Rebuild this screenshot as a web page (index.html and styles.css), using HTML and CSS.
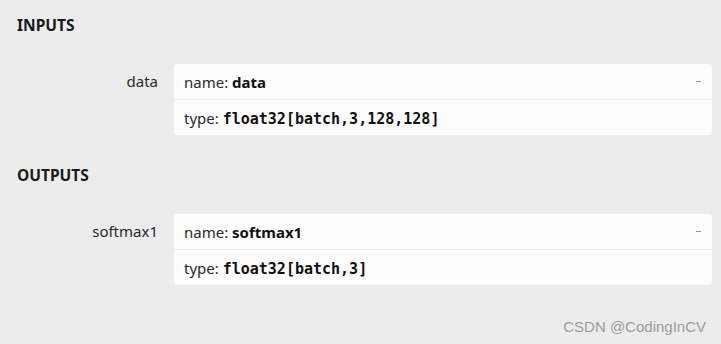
FILE: index.html
```html
<!DOCTYPE html>
<html lang="en">
<head>
  <meta charset="UTF-8" />
  <meta name="viewport" content="width=device-width, initial-scale=1.0" />
  <title>Model properties</title>
  <link rel="stylesheet" href="styles.css">
</head>
<body>
  <div class="sidebar">
    <div class="section">
      <div class="section-title">INPUTS</div>
      <div class="item">
        <div class="item-name">data</div>
        <div class="item-card">
          <div class="item-row">
            <span>name: <b>data</b></span>
            <span class="toggle"></span>
          </div>
          <div class="item-row">
            <span>type: <code>float32[batch,3,128,128]</code></span>
          </div>
        </div>
      </div>
    </div>

    <div class="section">
      <div class="section-title">OUTPUTS</div>
      <div class="item">
        <div class="item-name">softmax1</div>
        <div class="item-card">
          <div class="item-row">
            <span>name: <b>softmax1</b></span>
            <span class="toggle"></span>
          </div>
          <div class="item-row">
            <span>type: <code>float32[batch,3]</code></span>
          </div>
        </div>
      </div>
    </div>
  </div>

  <div class="watermark">CSDN @CodingInCV</div>
</body>
</html>
```

FILE: styles.css
```css
body {
  margin: 0;
  height: 100vh;
  background-color: #ececec;
  color: #222;
  font-family: "Noto Sans", "Open Sans", sans-serif;
  font-size: 15px;
  overflow: hidden;
}

.sidebar {
  padding: 15px 9px 0 17px;
}

.section {
  margin-bottom: 30px;
}

.section-title {
  font-weight: bold;
  font-size: 15.5px;
  line-height: 20px;
  color: #1a1a1a;
  margin-bottom: 29px;
}

.item {
  display: grid;
  grid-template-columns: 141px 538px;
  column-gap: 16px;
}

.item-name {
  text-align: right;
  line-height: 35px;
  color: #2a2a2a;
}

.item-card {
  background-color: #fcfcfc;
  border-radius: 3px;
}

.item-row {
  display: flex;
  align-items: center;
  justify-content: space-between;
  height: 35px;
  padding: 0 10px;
  color: #2a2a2a;
}

.item-row + .item-row {
  border-top: 1px solid #ececec;
}

.item-row b {
  color: #111;
}

.item-row code {
  font-family: "DejaVu Sans Mono", monospace;
  font-weight: bold;
  font-size: 15px;
  color: #111;
}

.toggle {
  width: 5px;
  height: 1px;
  background-color: #8a93a0;
  margin-right: 1px;
  margin-top: -1px;
}

.watermark {
  position: absolute;
  right: 15px;
  bottom: 9px;
  font-family: "Liberation Sans", Arial, sans-serif;
  font-size: 15px;
  color: #9c9c9c;
}
```
